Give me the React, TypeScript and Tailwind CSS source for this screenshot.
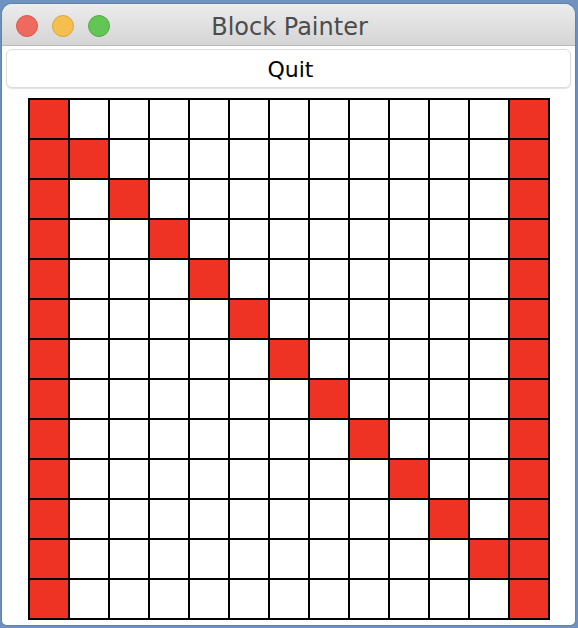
const SIZE = 13;

function isRed(r: number, c: number) {
  if (c === 0 || c === SIZE - 1) return true;
  return r >= 1 && r <= SIZE - 2 && r === c;
}

export default function App() {
  const cells = [];
  for (let r = 0; r < SIZE; r++) {
    for (let c = 0; c < SIZE; c++) {
      cells.push(
        <div key={`${r}-${c}`} className={isRed(r, c) ? "bg-[#ee3224]" : "bg-white"} />
      );
    }
  }

  return (
    <div className="w-[578px] h-[628px] bg-[#6f93c0] pt-[4px] pl-[2px] pr-[3px] pb-[3px] font-['DejaVu_Sans',sans-serif]">
      <div className="h-full flex flex-col bg-white rounded-t-[10px] rounded-b-[5px] overflow-hidden shadow-[0_0_2px_rgba(0,0,0,0.4)]">
        {/* title bar */}
        <div className="relative h-[42px] flex items-center justify-center bg-gradient-to-b from-[#ececec] to-[#d5d5d5] border-b border-[#b9b9b9]">
          <div className="absolute left-[14px] top-[11px] flex gap-[14px]">
            <span className="w-[22px] h-[22px] rounded-full bg-[#ee6a5f] border border-[#d8574d]" />
            <span className="w-[22px] h-[22px] rounded-full bg-[#f5bf4f] border border-[#dba33c]" />
            <span className="w-[22px] h-[22px] rounded-full bg-[#62c554] border border-[#50ac43]" />
          </div>
          <span className="text-[24px] text-[#4c4c4c] pt-[5px] pl-[2px]">Block Painter</span>
        </div>

        {/* content */}
        <div className="flex-1 bg-white px-[4px] pt-[3px]">
          <button className="w-full h-[39px] rounded-[6px] bg-white border border-[#dcdcdc] shadow-[0_1px_1px_rgba(0,0,0,0.12)] text-[22px] text-black pl-[4px] pt-[2px]">
            Quit
          </button>
          <div className="flex pt-[10px] pl-[22px]">
            <div className="grid grid-cols-[repeat(13,38px)] grid-rows-[repeat(13,38px)] gap-[2px] p-[2px] bg-black">
              {cells}
            </div>
          </div>
        </div>
      </div>
    </div>
  );
}
